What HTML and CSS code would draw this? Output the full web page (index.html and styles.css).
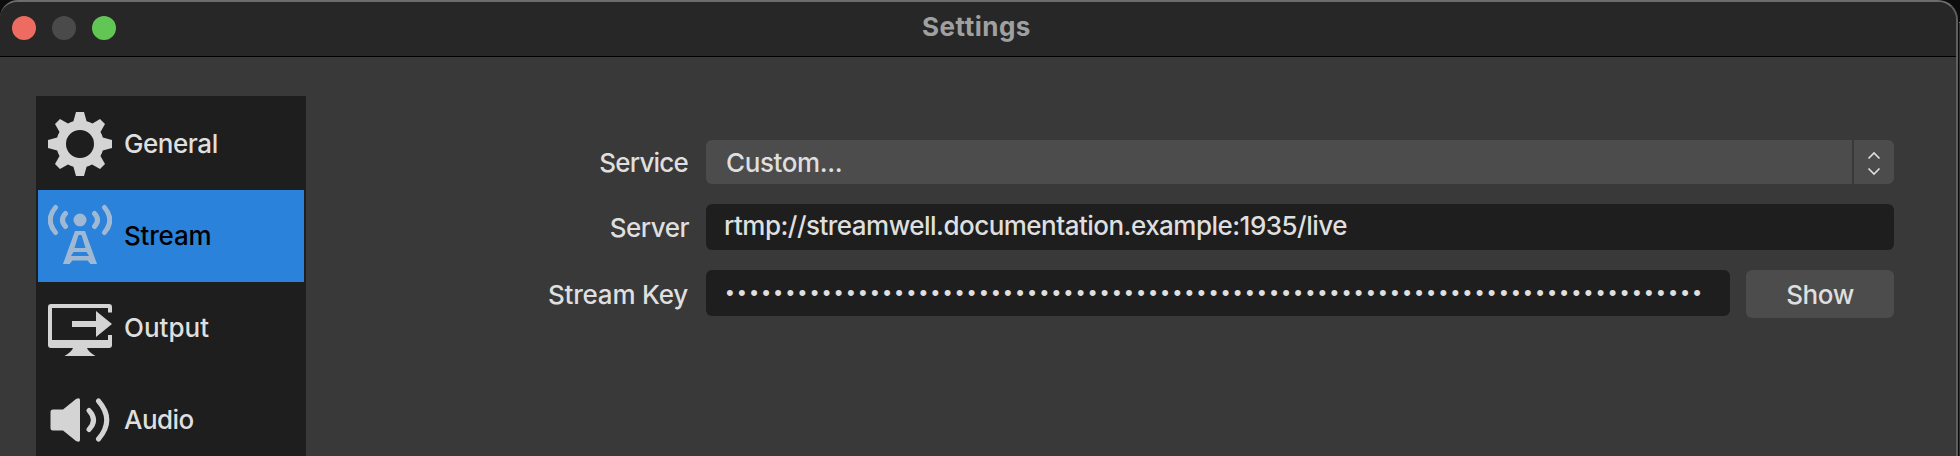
FILE: index.html
```
<!DOCTYPE html>
<html lang="en">
<head>
<meta charset="utf-8">
<title>Settings</title>
<link rel="stylesheet" href="styles.css">
</head>
<body>
<div class="backdrop"></div>
<main class="window">
  <header class="titlebar">
    <div class="lights"><i class="light close"></i><i class="light minimize"></i><i class="light zoom"></i></div>
    <h1 class="title">Settings</h1>
  </header>
  <div class="content">
    <nav class="sidebar">
      <a class="item general">
        <svg class="icon" viewBox="0 0 64 64"><path fill-rule="evenodd" d="M28 0H36L38.6 9.2Q42 10 44.500 11.500L52 7L57 12L52.500 20Q54 22.500 54.800 25.500L64 28V36L54.800 38.500Q54 41.500 52.500 44L57 52L52 57L44 52.500Q41.500 54 38.600 54.800L36 64H28L25.400 54.800Q22.500 54 20 52.500L12 57L7 52L11.500 44Q10 41.500 9.200 38.500L0 36V28L9.200 25.500Q10 22.500 11.500 20L7 12L12 7L20 11.500Q22.500 10 25.400 9.200ZM32 18A14 14 0 1 0 32 46A14 14 0 1 0 32 18Z"/></svg>
        <span class="name">General</span>
      </a>
      <a class="item stream selected">
        <svg class="icon" viewBox="0 0 64 64"><circle cx="32" cy="16" r="6.500"/><g class="waves"><path d="M7.500 3.500Q-3 16 7.500 28.500M17.500 9.500Q11.500 16 17.500 22.500M46.500 9.500Q52.500 16 46.500 22.500M56.500 3.500Q67 16 56.500 28.500"/></g><path fill-rule="evenodd" d="M27 27H37L49 60H42.500L39.500 56.500H24.500L21.500 60H15ZM30.500 31L26.500 44H37.500L33.500 31ZM25.500 48L23 52H41L38.500 48Z"/></svg>
        <span class="name">Stream</span>
      </a>
      <a class="item output">
        <svg class="icon" viewBox="0 0 64 64"><path fill-rule="evenodd" d="M3 8H61Q64 8 64 11V16.500H60V12H4V44H60V39H64V49Q64 52 61 52H39Q40 55.500 47.500 60H16.500Q24 55.500 25 52H3Q0 52 0 49V11Q0 8 3 8Z"/><path d="M24 25H48V15L64 28L48 41V31H24Z"/></svg>
        <span class="name">Output</span>
      </a>
      <a class="item audio">
        <svg class="icon" viewBox="0 0 64 64"><path d="M5 21.500H15L28 11Q32 9 32 12V52Q32 55 28 53L15 42.500H5Q2.500 42.500 2.500 40V24Q2.500 21.500 5 21.500Z"/><g class="waves"><path d="M41 22.500Q50 32 41 41.500M50.500 13Q67 32 50.500 51"/></g></svg>
        <span class="name">Audio</span>
      </a>
    </nav>
    <form class="form">
      <label class="label service">Service</label>
      <div class="combo"><span class="value">Custom...</span><span class="stepper"><svg class="arrows" viewBox="0 0 14 26"><path d="M1.500 8.500L7 3L12.500 8.500M1.500 18.500L7 24L12.500 18.500"/></svg></span></div>
      <label class="label server">Server</label>
      <div class="field address"><span>rtmp://streamwell.documentation.example:1935/live</span></div>
      <label class="label key">Stream Key</label>
      <div class="secret">
        <div class="field dots"><span>•••••••••••••••••••••••••••••••••••••••••••••••••••••••••••••••••••••••••••••••••</span></div>
        <button class="show" type="button">Show</button>
      </div>
    </form>
  </div>
</main>
</body>
</html>
```
FILE: styles.css
```
* { box-sizing: border-box; }
body {
  margin: 0;
  width: 1960px;
  height: 456px;
  overflow: hidden;
  position: relative;
  background: #0c0c0c;
  color: #dfdfdf;
  font: 500 26px/32px Inter, "Liberation Sans", sans-serif;
}
/* window behind the settings panel, visible along the right edge */
.backdrop {
  position: absolute;
  right: 0;
  top: 22px;
  width: 1px;
  height: 434px;
  background: #303030;
  border-top: 1px solid #777;
}
.window {
  position: relative;
  width: 1958px;
  height: 476px;
  border-top: 2px solid #6c6c6c;
  border-right: 2px solid #5e5e5e;
  border-radius: 18px 20px 0 0;
  background: #393939;
  overflow: hidden;
}
.titlebar {
  height: 55px;
  padding-left: 12px;
  display: grid;
  grid-template-columns: 104px 1fr 119px;
  align-items: center;
  background: #272727;
  border-bottom: 1px solid #000;
}
.lights { display: flex; gap: 16px; padding-bottom: 2px; }
.light { width: 24px; height: 24px; border-radius: 50%; }
.close { background: #ed6b60; }
.minimize { background: #4a4a4a; }
.zoom { background: #62c655; }
.title {
  margin: 0;
  padding-bottom: 4px;
  text-align: center;
  font-size: 26px;
  line-height: 32px;
  font-weight: 700;
  letter-spacing: 0.5px;
  color: #a0a0a0;
}
.content { display: flex; padding: 39px 62px 0 36px; }
.sidebar {
  width: 270px;
  height: 380px;
  padding: 2px;
  background: #1e1e1e;
}
.item {
  height: 92px;
  padding-left: 10px;
  display: flex;
  align-items: center;
  gap: 12px;
}
.general { letter-spacing: -0.45px; }
.audio { letter-spacing: -0.55px; }
.stream { letter-spacing: -0.2px; }
.output { letter-spacing: 0; }
.selected { background: #2a82da; color: #000; }
.icon { width: 64px; height: 64px; fill: #d4d4d4; flex: none; }
.selected .icon { fill: #9fb9d4; }
.waves { fill: none; stroke: #d4d4d4; stroke-width: 5; stroke-linecap: round; }
.selected .waves { stroke: #9fb9d4; }
.form {
  flex: 1;
  margin-top: 44px;
  display: grid;
  grid-template-columns: 383px 1188px;
  grid-template-rows: 44px 46px 48px;
  column-gap: 17px;
  row-gap: 20px;
  align-content: start;
}
.label { text-align: right; padding-top: 7px; white-space: nowrap; }
.service { padding-right: 1px; letter-spacing: -0.8px; }
.server { padding-top: 8px; letter-spacing: -0.5px; }
.key { padding-top: 9px; padding-right: 1px; letter-spacing: -0.2px; }
.combo { display: flex; gap: 2px; }
.value, .stepper { background: #4c4c4c; }
.value { flex: 1; padding: 8px 20px 6px; border-radius: 6px 0 0 6px; letter-spacing: -0.38px; line-height: 30px; }
.stepper {
  width: 40px;
  border-radius: 0 6px 6px 0;
  display: flex;
  align-items: center;
  justify-content: center;
}
.arrows { width: 14px; height: 26px; margin-top: 2px; fill: none; stroke: #dfdfdf; stroke-width: 1.6; }
.field {
  height: 46px;
  padding: 6px 18px;
  border-radius: 6px;
  background: #1e1e1e;
  white-space: nowrap;
}
.address { letter-spacing: -0.52px; }
.secret { display: grid; grid-template-columns: 1024px 148px; gap: 16px; }
.dots {
  padding: 7px 0 0 20px;
  font-family: "Liberation Sans", sans-serif;
  font-size: 22px;
  letter-spacing: 4.39px;
}
.show {
  height: 48px;
  padding: 1px 0 0;
  border: 0;
  border-radius: 6px;
  background: #4c4c4c;
  color: inherit;
  font: inherit;
  letter-spacing: -0.4px;
}
```
